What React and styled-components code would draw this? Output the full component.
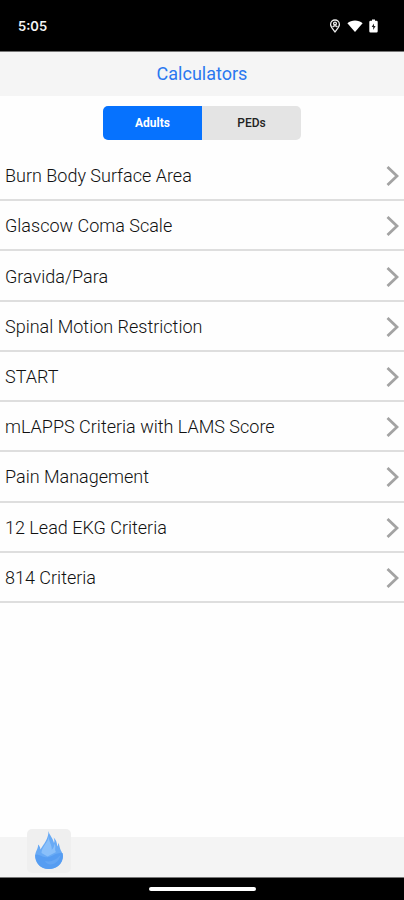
import React, { useState } from "react";
import styled, { createGlobalStyle } from "styled-components";

const GlobalStyle = createGlobalStyle`
  *, *::before, *::after { box-sizing: border-box; }
  body {
    margin: 0;
    background: #fff;
    font-family: Roboto, "Liberation Sans", sans-serif;
  }
`;

const Screen = styled.div`
  display: flex;
  flex-direction: column;
  min-height: 100vh;
  background: #fefefe;
`;

const StatusBar = styled.div`
  display: flex;
  align-items: center;
  justify-content: space-between;
  height: 52px;
  padding: 0 26px 0 18px;
  border-bottom: 1px solid #777;
  background: #000;
  color: #f4f4f4;
`;

const Clock = styled.time`
  font-size: 13px;
  font-weight: 600;
  line-height: 16px;
  font-family: Inter, Roboto, sans-serif;
`;

const StatusIcons = styled.div`
  display: flex;
  align-items: center;
  gap: 6px;
`;

const Header = styled.header`
  display: flex;
  align-items: center;
  justify-content: center;
  height: 44px;
  background: #f5f5f5;
`;

const Title = styled.h1`
  margin: 0;
  color: #2a78f0;
  font-size: 18px;
  font-weight: 400;
  line-height: 24px;
`;

const Main = styled.main`
  flex: 1;
`;

const Segments = styled.div`
  display: grid;
  grid-template-columns: 1fr 1fr;
  width: 49%;
  margin: 10px auto 11px;
  border-radius: 5px;
  overflow: hidden;
`;

const Segment = styled.button`
  height: 34px;
  padding: 0;
  border: 0;
  background: ${(p) => (p.$active ? "#0672fe" : "#e4e4e4")};
  color: ${(p) => (p.$active ? "#fff" : "#222")};
  font-family: inherit;
  font-size: 12px;
  font-weight: ${(p) => (p.$active ? 700 : 500)};
  cursor: pointer;
`;

const List = styled.ul`
  display: grid;
  grid-auto-rows: 1fr;
  min-height: 452px;
  margin: 0;
  padding: 0;
  list-style: none;
`;

const Item = styled.li`
  display: flex;
  border-bottom: 2px solid #dedede;
`;

const RowLink = styled.a`
  display: flex;
  flex: 1;
  align-items: center;
  justify-content: space-between;
  padding: 2px 5px 0;
  color: #111;
  font-size: 18px;
  font-weight: 300;
  line-height: 24px;
  text-decoration: none;
`;

const Footer = styled.footer`
  display: flex;
  align-items: flex-end;
  height: 40px;
  padding: 0 27px 4px;
  background: #f4f4f4;
`;

const HomeButton = styled.button`
  display: flex;
  align-items: flex-start;
  justify-content: center;
  flex: none;
  width: 44px;
  height: 44px;
  padding: 2px 0 0;
  border: 0;
  border-radius: 5px;
  background: #efefef;
  cursor: pointer;
`;

const GestureBar = styled.div`
  display: flex;
  justify-content: center;
  height: 23px;
  padding-top: 9px;
  border-top: 1px solid #777;
  background: #000;
`;

const Handle = styled.div`
  width: 107px;
  height: 4px;
  border-radius: 2px;
  background: #fff;
`;

const PinIcon = () => (
  <svg width="12" height="14" viewBox="0 0 12 14" fill="none" stroke="#eee" strokeWidth="1.3" aria-hidden="true">
    <path d="M6 12.8C3.8 9.8 1.6 7.8 1.6 5.4a4.4 4.4 0 0 1 8.8 0C10.4 7.8 8.2 9.8 6 12.8Z" />
    <circle cx="6" cy="4.6" r="1.4" />
    <path d="M3.6 8c1.2-1.5 3.6-1.5 4.8 0" />
  </svg>
);

const WifiIcon = () => (
  <svg width="16" height="14" viewBox="0 0 16 14" fill="#fff" aria-hidden="true">
    <path d="M.4 4.2C4.6.6 11.4.6 15.6 4.2L8 13Z" />
  </svg>
);

const BatteryIcon = () => (
  <svg width="9" height="14" viewBox="0 0 9 14" aria-hidden="true">
    <path fill="#fff" d="M3 .6h3v1.2h1.5q1.2 0 1.2 1.2v9.2q0 1.2-1.2 1.2h-6q-1.2 0-1.2-1.2V3q0-1.2 1.2-1.2H3Z" />
    <path fill="#222" d="M5 4.4 2.6 8.1h1.6v2.9l2.4-3.9H5Z" />
  </svg>
);

const Chevron = () => (
  <svg width="13" height="20" viewBox="0 0 13 20" fill="none" stroke="#a3a3a3" strokeWidth="2.8" aria-hidden="true">
    <path d="M1.500 1 11 10 1.500 19" />
  </svg>
);

const Flame = () => (
  <svg width="28" height="38" viewBox="0 0 28 38" aria-hidden="true">
    <path fill="#68aaf5" d="M13.500 0c.5 3.500 4.500 7 5.500 12 .7-1.600.4-3.800-.4-5.500 2.300 2 3.500 5 3.700 9 .9-1.200 1-2.700.8-4 1.600 2.500 1.400 5.500 2.800 8C27.500 22 28 24 27.600 26.500 26.500 33.500 21 38 14 38S1 33.500.2 26.500C-.5 21 3.500 18.500 3 13.500c1.700 1.500 2.400 3 2.300 5C9 13 13.500 7.500 13.500 0Z" />
    <path fill="#8ac0fa" d="M13.800 5c-.5 7-7 10-7.300 17l6 3.500L21 21c-2-3 .5-5.500-1.500-8-.2 3-1.500 4.500-2.700 6 .4-5-3.300-8.500-3-14Z" />
    <path fill="#569df2" d="M.2 24c3.300-2 5.800 2 10.300 2.200 6.500.2 10-5.200 17-4.200 2.500 9-5 16-13.500 16S.5 32 .2 24Z" />
    <path fill="#64a6f4" d="M10 30c6.500 1.500 11.500-1.500 15.500-6-1 5.500-5.500 9.500-10 9.500-2.500 0-4.500-1.500-5.500-3.500Z" />
  </svg>
);

const groups = ["Adults", "PEDs"];

const calculators = [
  "Burn Body Surface Area",
  "Glascow Coma Scale",
  "Gravida/Para",
  "Spinal Motion Restriction",
  "START",
  "mLAPPS Criteria with LAMS Score",
  "Pain Management",
  "12 Lead EKG Criteria",
  "814 Criteria",
];

export default function App() {
  const [group, setGroup] = useState("Adults");

  return (
    <Screen>
      <GlobalStyle />
      <StatusBar>
        <Clock>5:05</Clock>
        <StatusIcons>
          <PinIcon />
          <WifiIcon />
          <BatteryIcon />
        </StatusIcons>
      </StatusBar>
      <Header>
        <Title>Calculators</Title>
      </Header>
      <Main>
        <Segments role="group" aria-label="Patient group">
          {groups.map((name) => (
            <Segment
              key={name}
              type="button"
              $active={name === group}
              aria-pressed={name === group}
              onClick={() => setGroup(name)}
            >
              {name}
            </Segment>
          ))}
        </Segments>
        <List>
          {calculators.map((name) => (
            <Item key={name}>
              <RowLink href="#">
                {name}
                <Chevron />
              </RowLink>
            </Item>
          ))}
        </List>
      </Main>
      <Footer>
        <HomeButton type="button" aria-label="Home">
          <Flame />
        </HomeButton>
      </Footer>
      <GestureBar>
        <Handle />
      </GestureBar>
    </Screen>
  );
}
